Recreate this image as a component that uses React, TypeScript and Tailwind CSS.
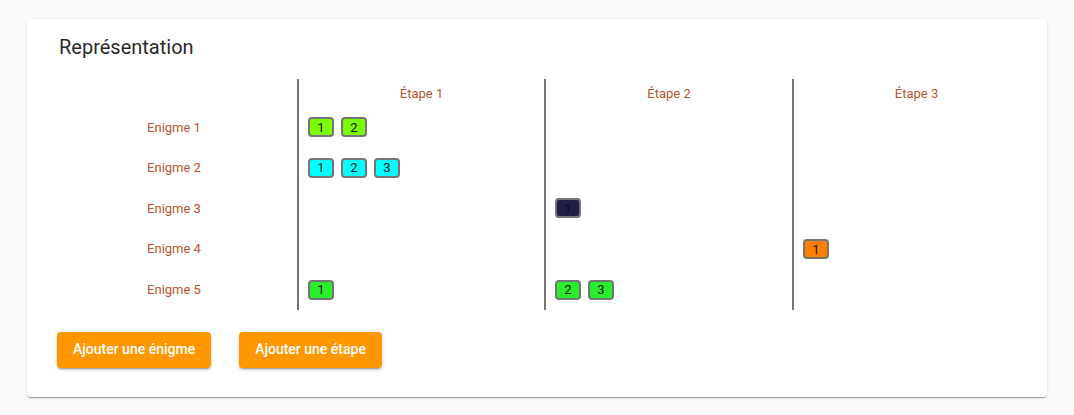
const etapes = ["Étape 1", "Étape 2", "Étape 3"];

type Chip = { n: number; bg: string };

const enigmes: { name: string; cells: Chip[][] }[] = [
  { name: "Enigme 1", cells: [[{ n: 1, bg: "bg-[#7cfc00]" }, { n: 2, bg: "bg-[#7cfc00]" }], [], []] },
  {
    name: "Enigme 2",
    cells: [[{ n: 1, bg: "bg-[#00ffff]" }, { n: 2, bg: "bg-[#00ffff]" }, { n: 3, bg: "bg-[#00ffff]" }], [], []],
  },
  { name: "Enigme 3", cells: [[], [{ n: 1, bg: "bg-[#201d47]" }], []] },
  { name: "Enigme 4", cells: [[], [], [{ n: 1, bg: "bg-[#ff8000]" }]] },
  {
    name: "Enigme 5",
    cells: [[{ n: 1, bg: "bg-[#2aee2a]" }], [{ n: 2, bg: "bg-[#2aee2a]" }, { n: 3, bg: "bg-[#2aee2a]" }], []],
  },
];

const Badge = ({ chip }: { chip: Chip }) => (
  <div
    className={`w-[26px] h-[20px] rounded-[4px] border-2 border-[#757575] flex items-center justify-center text-[13px] leading-none text-[#111] ${chip.bg}`}
  >
    {chip.n}
  </div>
);

export default function App() {
  return (
    <div className="min-h-[415px] bg-[#fafafa] px-[27px] pt-[19px] pb-[18px] font-['Roboto',sans-serif]">
      <div className="bg-white rounded-[4px] shadow-[0_2px_1px_-1px_rgba(0,0,0,0.2),0_1px_1px_0_rgba(0,0,0,0.14),0_1px_3px_0_rgba(0,0,0,0.12)] pb-[29px]">
        <h2 className="pt-4 pl-8 text-[20px] leading-[24px] text-[rgba(0,0,0,0.87)]">Représentation</h2>

        <div className="mt-5 ml-6 grid grid-cols-[246px_247px_248px_247px] text-[13px] text-[#b8532c]">
          <div className="h-[28px]" />
          {etapes.map((e) => (
            <div key={e} className="h-[28px] border-l-2 border-[#757575] flex items-center justify-center pt-[2px]">
              {e}
            </div>
          ))}
          {enigmes.map((row) => (
            <div key={row.name} className="contents">
              <div className="h-[40.6px] flex items-center justify-center">{row.name}</div>
              {row.cells.map((cell, i) => (
                <div key={i} className="h-[40.6px] border-l-2 border-[#757575] pl-[9px] flex items-center gap-[7px]">
                  {cell.map((c) => (
                    <Badge key={c.n} chip={c} />
                  ))}
                </div>
              ))}
            </div>
          ))}
        </div>

        <div className="mt-[22px] ml-[30px] flex gap-[28px]">
          <button className="h-[36px] px-4 rounded-[4px] bg-[#ff9800] text-white text-[14px] font-medium shadow-[0_3px_1px_-2px_rgba(0,0,0,0.2),0_2px_2px_0_rgba(0,0,0,0.14),0_1px_5px_0_rgba(0,0,0,0.12)]">
            Ajouter une énigme
          </button>
          <button className="h-[36px] px-4 rounded-[4px] bg-[#ff9800] text-white text-[14px] font-medium shadow-[0_3px_1px_-2px_rgba(0,0,0,0.2),0_2px_2px_0_rgba(0,0,0,0.14),0_1px_5px_0_rgba(0,0,0,0.12)]">
            Ajouter une étape
          </button>
        </div>
      </div>
    </div>
  );
}
